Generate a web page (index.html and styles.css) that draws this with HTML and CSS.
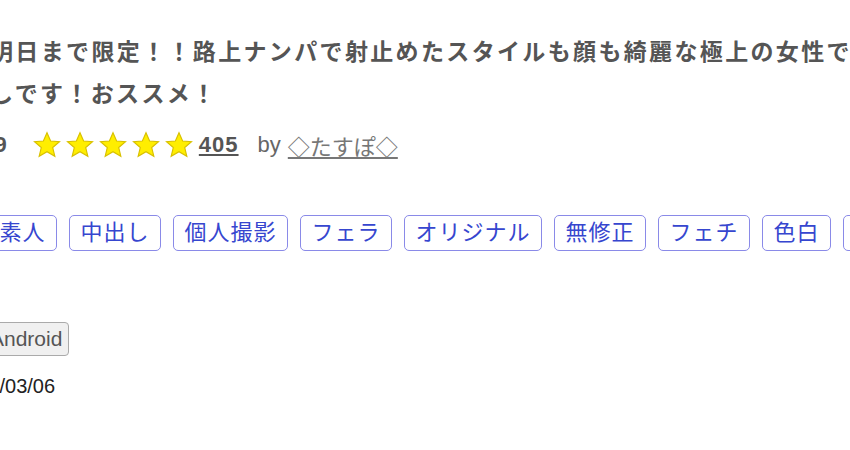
FILE: index.html
```html
<!DOCTYPE html>
<html lang="ja">
<head>
  <meta charset="UTF-8">
  <meta name="viewport" content="width=device-width, initial-scale=1.0">
  <title>作品詳細</title>
  <link rel="stylesheet" href="styles.css">
</head>
<body>

  <div class="item">
    <!-- Title -->
    <h1 class="item-title">明日まで限定！！路上ナンパで射止めたスタイルも顔も綺麗な極上の女性で<br>しです！おススメ！</h1>

    <!-- Rating -->
    <div class="rating">
      <span class="score">4.89</span>
      <span class="stars">
        <svg class="star" viewBox="0 0 24 24"><path d="M12 1.5l3.1 7.1 7.6.6-5.8 5 1.8 7.5L12 17.7l-6.7 4 1.8-7.5-5.8-5 7.6-.6z"/></svg>
        <svg class="star" viewBox="0 0 24 24"><path d="M12 1.5l3.1 7.1 7.6.6-5.8 5 1.8 7.5L12 17.7l-6.7 4 1.8-7.5-5.8-5 7.6-.6z"/></svg>
        <svg class="star" viewBox="0 0 24 24"><path d="M12 1.5l3.1 7.1 7.6.6-5.8 5 1.8 7.5L12 17.7l-6.7 4 1.8-7.5-5.8-5 7.6-.6z"/></svg>
        <svg class="star" viewBox="0 0 24 24"><path d="M12 1.5l3.1 7.1 7.6.6-5.8 5 1.8 7.5L12 17.7l-6.7 4 1.8-7.5-5.8-5 7.6-.6z"/></svg>
        <svg class="star" viewBox="0 0 24 24"><path d="M12 1.5l3.1 7.1 7.6.6-5.8 5 1.8 7.5L12 17.7l-6.7 4 1.8-7.5-5.8-5 7.6-.6z"/></svg>
      </span>
      <a href="#" class="review-count">405</a>
      <span class="by">by</span>
      <a href="#" class="seller">◇たすぽ◇</a>
    </div>

    <!-- Tags -->
    <ul class="tags">
      <li><a href="#" class="tag">素人</a></li>
      <li><a href="#" class="tag">中出し</a></li>
      <li><a href="#" class="tag">個人撮影</a></li>
      <li><a href="#" class="tag">フェラ</a></li>
      <li><a href="#" class="tag">オリジナル</a></li>
      <li><a href="#" class="tag">無修正</a></li>
      <li><a href="#" class="tag">フェチ</a></li>
      <li><a href="#" class="tag">色白</a></li>
      <li><a href="#" class="tag">美乳</a></li>
    </ul>

    <!-- Device -->
    <div class="devices">
      <span class="device">Android</span>
    </div>

    <div class="date">2024/03/06</div>
  </div>

</body>
</html>
```

FILE: styles.css
```css
body {
  font-family: "Liberation Sans", "Noto Sans CJK JP", sans-serif;
  margin: 0;
  background-color: #fff;
  color: #555;
  overflow: hidden;
}

.item {
  width: 900px;
  padding-top: 31px;
}

.item-title {
  margin: 0 0 0 -10px;
  font-size: 23px;
  font-weight: bold;
  line-height: 42px;
  letter-spacing: 2.35px;
  color: #555;
  white-space: nowrap;
}

.rating {
  display: flex;
  align-items: center;
  margin: 15px 0 0 -36px;
  height: 30px;
  font-size: 22px;
  white-space: nowrap;
}

.score {
  font-weight: bold;
  margin-right: 26px;
}

.stars {
  display: flex;
  gap: 5px;
  margin-right: 6px;
}

.star {
  width: 28px;
  height: 28px;
  fill: #ffee00;
  stroke: #d8c000;
  stroke-width: 1;
}

.review-count {
  color: #555;
  font-weight: bold;
  letter-spacing: 1px;
  margin-right: 19px;
}

.by {
  color: #666;
  margin-right: 7px;
}

.seller {
  color: #777;
}

.tags {
  display: flex;
  gap: 12px;
  list-style: none;
  margin: 55px 0 0 -12px;
  padding: 0;
}

.tags li {
  flex-shrink: 0;
}

.tag {
  display: block;
  padding: 4px 10.5px;
  line-height: 26px;
  font-size: 22px;
  letter-spacing: 1px;
  white-space: nowrap;
  color: #3646cf;
  text-decoration: none;
  border: 1px solid #8a8ae8;
  border-radius: 5px;
}

.devices {
  margin: 71px 0 0 -17px;
}

.device {
  display: inline-block;
  padding: 2px 6px;
  font-size: 21px;
  line-height: 28px;
  color: #555;
  background-color: #f0f0f0;
  border: 1px solid #aaa;
  border-radius: 4px;
}

.date {
  margin: 19px 0 0 -45px;
  font-size: 20px;
  color: #222;
}
```
